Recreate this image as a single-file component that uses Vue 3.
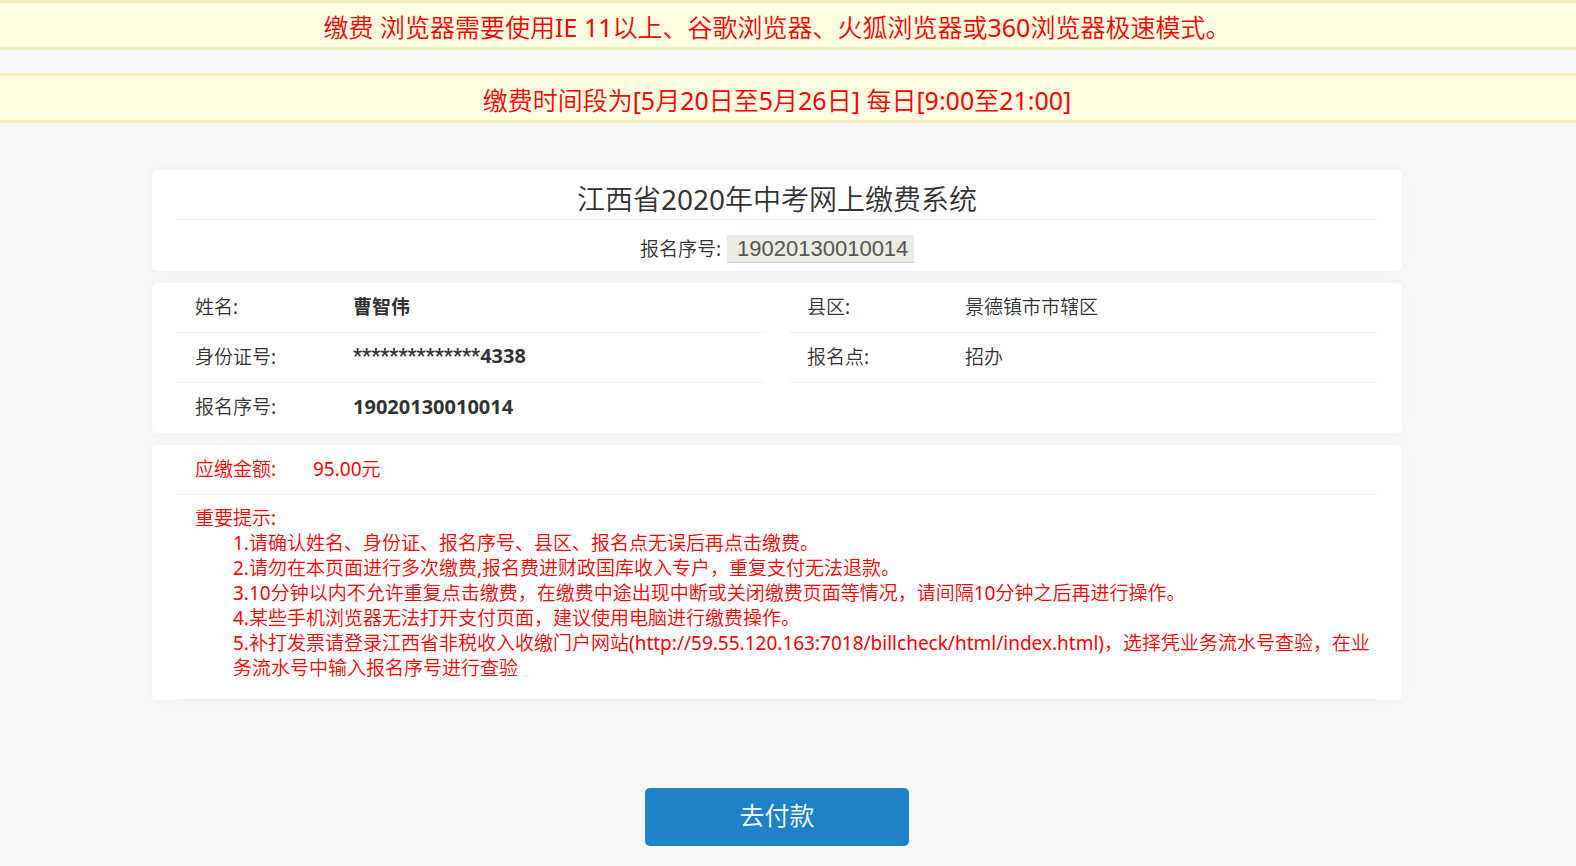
<script setup>
import { ref } from 'vue'

const serial = ref('19020130010014')

const columns = [
  [
    { label: '姓名:', value: '曹智伟', strong: true },
    { label: '身份证号:', mask: '**************', value: '4338', strong: true, digits: true },
    { label: '报名序号:', value: '19020130010014', strong: true, digits: true }
  ],
  [
    { label: '县区:', value: '景德镇市市辖区' },
    { label: '报名点:', value: '招办' }
  ]
]

const tips = [
  '1.请确认姓名、身份证、报名序号、县区、报名点无误后再点击缴费。',
  '2.请勿在本页面进行多次缴费,报名费进财政国库收入专户，重复支付无法退款。',
  '3.10分钟以内不允许重复点击缴费，在缴费中途出现中断或关闭缴费页面等情况，请间隔10分钟之后再进行操作。',
  '4.某些手机浏览器无法打开支付页面，建议使用电脑进行缴费操作。',
  '5.补打发票请登录江西省非税收入收缴门户网站(http://59.55.120.163:7018/billcheck/html/index.html)，选择凭业务流水号查验，在业务流水号中输入报名序号进行查验'
]
</script>

<template>
  <div class="page" lang="zh-CN">
    <p class="notice">缴费 浏览器需要使用IE 11以上、谷歌浏览器、火狐浏览器或360浏览器极速模式。</p>
    <p class="notice">缴费时间段为[5月20日至5月26日] 每日[9:00至21:00]</p>

    <main class="content">
      <section class="card">
        <h1 class="title">江西省2020年中考网上缴费系统</h1>
        <div class="serial">
          <label for="serial">报名序号:</label>
          <input id="serial" v-model="serial" type="text" readonly />
        </div>
      </section>

      <section class="card info">
        <dl v-for="(column, i) in columns" :key="i" class="column">
          <div v-for="item in column" :key="item.label" class="row">
            <dt>{{ item.label }}</dt>
            <dd :class="{ strong: item.strong, digits: item.digits }"><span v-if="item.mask" class="mask">{{ item.mask }}</span>{{ item.value }}</dd>
          </div>
        </dl>
      </section>

      <section class="card payment">
        <dl class="row amount">
          <dt>应缴金额:</dt>
          <dd>95.00元</dd>
        </dl>
        <div class="tips">
          <h2>重要提示:</h2>
          <ul>
            <li v-for="tip in tips" :key="tip">{{ tip }}</li>
          </ul>
        </div>
      </section>

      <button type="button" class="pay">去付款</button>
    </main>
  </div>
</template>

<style>
body {
  margin: 0;
  background: #f7f7f7;
}
</style>

<style scoped>
.page {
  color: #333;
  font-family: "Noto Sans", "Noto Sans CJK SC DemiLight", "Noto Sans CJK SC", sans-serif;
  font-size: 19px;
  font-weight: 400;
  line-height: 25px;
}

.notice {
  margin: 0 0 23px;
  padding: 4px 22px 0 0;
  border-top: 3px solid #f6edbe;
  border-bottom: 3px solid #f6edbe;
  background: #fffde2;
  color: #f00;
  font-size: 25px;
  line-height: 40px;
  text-align: center;
}

.content {
  display: flex;
  flex-direction: column;
  gap: 12px;
  max-width: 1250px;
  margin: 0 auto;
  padding: 24px 22px 20px 0;
}

.card {
  padding: 0 25px;
  border-radius: 5px;
  background: #fff;
  box-shadow: 0 0 12px rgba(0, 0, 0, 0.03);
}

.title {
  margin: 0;
  padding-top: 9px;
  border-bottom: 1px solid #f0f0f0;
  font-size: 28px;
  font-weight: 400;
  line-height: 40px;
  text-align: center;
}

.serial {
  display: flex;
  justify-content: center;
  align-items: center;
  gap: 6px;
  padding: 15px 0 8px;
}

.serial input {
  box-sizing: border-box;
  width: 187px;
  height: 28px;
  padding: 0 0 0 10px;
  border: 0;
  border-bottom: 1px solid #ccc;
  border-radius: 0;
  background: #ebebe4;
  color: #555;
  font-family: "Liberation Sans", Arial, sans-serif;
  font-size: 22px;
}

dl,
dd {
  margin: 0;
}

.info {
  display: grid;
  grid-template-columns: 1fr 1fr;
  gap: 24px;
}

.row {
  display: flex;
  align-items: center;
  min-height: 49px;
  padding: 0 18px;
  border-bottom: 1px solid #f0f0f0;
}

.row:nth-child(3) {
  border-bottom-color: transparent;
}

.row dt {
  width: 158px;
}

.strong {
  font-family: "Noto Sans", "Noto Sans CJK SC", sans-serif;
  font-weight: 700;
}

.digits {
  padding-bottom: 3px;
  font-size: 20px;
}

.mask {
  font-family: Roboto, sans-serif;
}

.payment {
  color: #f00;
}

.amount dt {
  width: 118px;
}

.tips {
  padding: 11px 0 18px 18px;
  border-bottom: 1px solid #f0f0f0;
}

.tips h2 {
  margin: 0;
  font-size: 19px;
  font-weight: 400;
}

.tips ul {
  margin: 0;
  padding: 0 0 0 38px;
  list-style: none;
}

.pay {
  align-self: center;
  width: 264px;
  height: 58px;
  margin-top: 76px;
  padding: 0 0 6px;
  border: 0;
  border-radius: 5px;
  background: #1e82c8;
  color: #fff;
  font-family: inherit;
  font-size: 25px;
  cursor: pointer;
}
</style>
